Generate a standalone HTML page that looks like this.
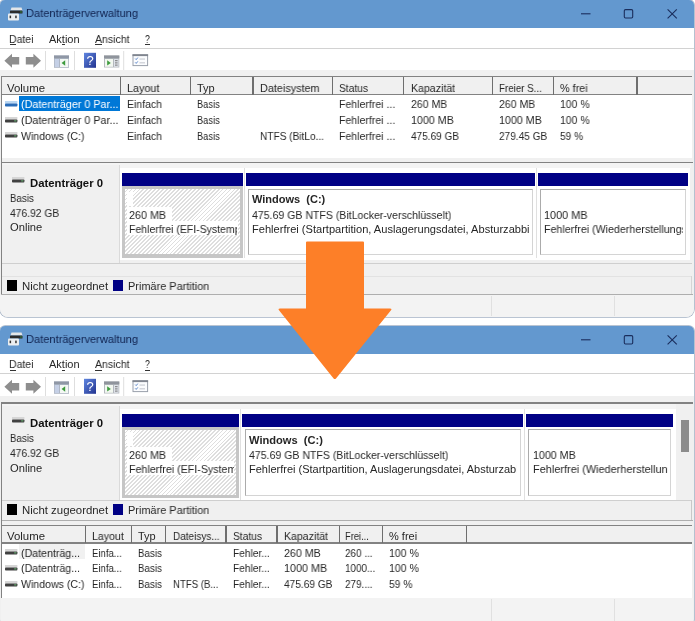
<!DOCTYPE html>
<html lang="de"><head><meta charset="utf-8"><title>Datenträgerverwaltung</title><style>
html,body{margin:0;padding:0;background:#fff;}
body{width:695px;height:621px;position:relative;overflow:hidden;font-family:"Liberation Sans",sans-serif;}
body>div,body>span,body>svg{position:absolute;}
.t{will-change:transform;white-space:pre;transform-origin:0 50%;display:block;}
.win{background:#f0f0f0;border-radius:5px 5px 8px 8px;box-shadow:0 0 0 0.8px #a3b1c4;}
</style></head><body>
<div class="win" style="left:0;top:0;width:694px;height:317.2px"></div>
<div style="left:0px;top:0px;width:694px;height:28px;background:#6398cf;border-radius:5px 5px 0 0;"></div>
<svg style="left:8px;top:6.5px" width="15" height="14" viewBox="0 0 15 14"><path d="M3.5 0.5 H13.5 L14.5 3.5 H2.5 Z" fill="#e4e6e8"/><rect x="2" y="3.5" width="12.5" height="3" rx="0.6" fill="#2b2b2b"/><rect x="12.3" y="4.3" width="1.4" height="1.3" fill="#2e8b3e"/><rect x="0" y="6.5" width="11" height="7" rx="1" fill="#eceef0"/><rect x="1.6" y="8.6" width="1.5" height="2.6" fill="#333"/><rect x="7.2" y="8.6" width="1.5" height="2.6" fill="#333"/></svg>
<span class="t" style="left:26px;top:6.15px;font-size:11.5px;line-height:14.5px;color:#10224f;transform:scaleX(0.9626);">Datenträgerverwaltung</span>
<svg style="left:575px;top:0px" width="110" height="28" viewBox="0 0 110 28" fill="none" stroke="#1a2d5c" stroke-width="1.1"><path d="M6 13.8 H15.5"/><rect x="49.3" y="9.6" width="8.4" height="8.4" rx="1.2"/><path d="M92.6 9.4 L101.8 18.4 M101.8 9.4 L92.6 18.4"/></svg>
<div style="left:0px;top:28px;width:694px;height:21px;background:#fff;"></div>
<div style="left:0px;top:47.8px;width:694px;height:1.2px;background:#d2d2d2;"></div>
<div style="left:0px;top:49px;width:694px;height:21px;background:#fff;"></div>
<span class="t" style="left:9.4px;top:31.8px;font-size:11px;line-height:14px;color:#262626;transform:scaleX(0.9541);">Datei</span>
<span class="t" style="left:49.3px;top:31.8px;font-size:11px;line-height:14px;color:#262626;transform:scaleX(0.9943);">Aktion</span>
<span class="t" style="left:95.3px;top:31.8px;font-size:11px;line-height:14px;color:#262626;transform:scaleX(0.9564);">Ansicht</span>
<span class="t" style="left:145px;top:31.8px;font-size:11px;line-height:14px;color:#262626;transform:scaleX(0.7846);">?</span>
<div style="left:9.6px;top:44.3px;width:6.5px;height:0.9px;background:#333;"></div>
<div style="left:61.7px;top:44.3px;width:3.3px;height:0.9px;background:#333;"></div>
<div style="left:95.4px;top:44.3px;width:6.8px;height:0.9px;background:#333;"></div>
<div style="left:145px;top:44.3px;width:4.8px;height:0.9px;background:#333;"></div>
<svg style="left:0;top:49px" width="160" height="22" viewBox="0 49 160 22"><path d="M4.4 60.8 L12 53.8 V57 H19.2 V64.6 H12 V67.8 Z" fill="#8e8e8e"/><path d="M41 60.8 L33.4 53.8 V57 H25.8 V64.6 H33.4 V67.8 Z" fill="#8e8e8e"/><rect x="45" y="51" width="1" height="19" fill="#dedede"/><rect x="54" y="55.5" width="15" height="12.3" fill="#aeb6c4"/><rect x="54" y="55.5" width="15" height="2.8" fill="#8f97a5"/><rect x="54.8" y="59" width="4.2" height="8" fill="#c5d0e6"/><rect x="60" y="59" width="8.2" height="8" fill="#f4f8f4"/><path d="M61.6 63 L65.2 60.2 V65.8 Z" fill="#3d9b3d"/><rect x="74" y="51" width="1" height="19" fill="#dedede"/><defs><linearGradient id="hg" x1="0" y1="0" x2="1" y2="1"><stop offset="0" stop-color="#5f86e0"/><stop offset="1" stop-color="#22338f"/></linearGradient></defs><rect x="84" y="52.8" width="12" height="15" fill="url(#hg)"/><text x="90" y="65" font-family="Liberation Sans, sans-serif" font-size="13" fill="#fff" text-anchor="middle">?</text><rect x="104" y="55.5" width="15.3" height="12" fill="#b4b8be"/><rect x="104" y="55.5" width="15.3" height="2.8" fill="#8f949c"/><rect x="105" y="59" width="8" height="7.8" fill="#f2f7f0"/><path d="M110.8 62.9 L107.2 60.2 V65.6 Z" fill="#3d9b3d"/><rect x="114" y="59" width="4.5" height="7.8" fill="#dfe3ea"/><rect x="115" y="60.2" width="2.6" height="1" fill="#777"/><rect x="115" y="62.4" width="2.6" height="1" fill="#777"/><rect x="115" y="64.6" width="2.6" height="1" fill="#777"/><rect x="123.2" y="51" width="1" height="19" fill="#dedede"/><rect x="133" y="54.8" width="14.6" height="10.8" fill="#fbfcfe" stroke="#9aa0ab" stroke-width="1"/><rect x="132.5" y="54.3" width="15.6" height="1.8" fill="#80858f"/><path d="M135.2 58.6 l1 1 l1.6 -2 M135.2 62.4 l1 1 l1.6 -2" stroke="#5b86c9" stroke-width="1" fill="none"/><rect x="139.5" y="58.6" width="5.5" height="0.9" fill="#b9bdc6"/><rect x="139.5" y="62.4" width="5.5" height="0.9" fill="#b9bdc6"/></svg>
<div style="left:0.6px;top:76.1px;width:691.6px;height:81.9px;background:#fff;"></div>
<div style="left:0.6px;top:77.1px;width:691.6px;height:17.9px;background:#f0f0f0;"></div>
<div style="left:0.6px;top:76.1px;width:691.6px;height:1.3px;background:#828282;"></div>
<div style="left:0.6px;top:94px;width:691.6px;height:1.3px;background:#828282;"></div>
<div style="left:0.5px;top:76.1px;width:1.4px;height:81.9px;background:#828282;"></div>
<span class="t" style="left:7.3px;top:80.6px;font-size:11px;line-height:14px;color:#262626;transform:scaleX(1.0357);">Volume</span>
<div style="left:119.65px;top:77.1px;width:1.3px;height:17.9px;background:#6e6e6e;"></div>
<span class="t" style="left:126.8px;top:80.6px;font-size:11px;line-height:14px;color:#262626;transform:scaleX(0.9810);">Layout</span>
<div style="left:189.65px;top:77.1px;width:1.3px;height:17.9px;background:#6e6e6e;"></div>
<span class="t" style="left:197.3px;top:80.6px;font-size:11px;line-height:14px;color:#262626;transform:scaleX(0.9926);">Typ</span>
<div style="left:252.35px;top:77.1px;width:1.3px;height:17.9px;background:#6e6e6e;"></div>
<span class="t" style="left:259.9px;top:80.6px;font-size:11px;line-height:14px;color:#262626;transform:scaleX(0.9848);">Dateisystem</span>
<div style="left:331.75px;top:77.1px;width:1.3px;height:17.9px;background:#6e6e6e;"></div>
<span class="t" style="left:339.4px;top:80.6px;font-size:11px;line-height:14px;color:#262626;transform:scaleX(0.9299);">Status</span>
<div style="left:402.75px;top:77.1px;width:1.3px;height:17.9px;background:#6e6e6e;"></div>
<span class="t" style="left:410.5px;top:80.6px;font-size:11px;line-height:14px;color:#262626;transform:scaleX(0.9615);">Kapazität</span>
<div style="left:491.95px;top:77.1px;width:1.3px;height:17.9px;background:#6e6e6e;"></div>
<span class="t" style="left:499.1px;top:80.6px;font-size:11px;line-height:14px;color:#262626;transform:scaleX(0.8864);">Freier S...</span>
<div style="left:552.75px;top:77.1px;width:1.3px;height:17.9px;background:#6e6e6e;"></div>
<span class="t" style="left:560.4px;top:80.6px;font-size:11px;line-height:14px;color:#262626;transform:scaleX(0.9816);">% frei</span>
<div style="left:636.35px;top:77.1px;width:1.3px;height:17.9px;background:#6e6e6e;"></div>
<div style="left:19.2px;top:95.7px;width:101.2px;height:15px;background:#0078d7;"></div>
<svg style="left:5px;top:100.7px" width="13" height="7" viewBox="0 0 13 7"><rect x="0" y="0" width="12.4" height="2.6" fill="#b9d6f2"/><rect x="0" y="2.4" width="12.4" height="3.2" rx="0.8" fill="#2a6cb8"/></svg>
<span class="t" style="left:20.6px;top:97.3px;font-size:11px;line-height:14px;color:#fff;transform:scaleX(0.9783);">(Datenträger 0 Par...</span>
<span class="t" style="left:126.8px;top:97.3px;font-size:11px;line-height:14px;color:#262626;transform:scaleX(0.9539);">Einfach</span>
<span class="t" style="left:197.3px;top:97.3px;font-size:11px;line-height:14px;color:#262626;transform:scaleX(0.8439);">Basis</span>
<span class="t" style="left:339.4px;top:97.3px;font-size:11px;line-height:14px;color:#262626;transform:scaleX(0.9576);">Fehlerfrei ...</span>
<span class="t" style="left:410.5px;top:97.3px;font-size:11px;line-height:14px;color:#262626;transform:scaleX(0.9575);">260 MB</span>
<span class="t" style="left:499.1px;top:97.3px;font-size:11px;line-height:14px;color:#262626;transform:scaleX(0.9575);">260 MB</span>
<span class="t" style="left:560.4px;top:97.3px;font-size:11px;line-height:14px;color:#262626;transform:scaleX(0.9490);">100 %</span>
<svg style="left:5px;top:116.5px" width="13" height="7" viewBox="0 0 13 7"><rect x="0" y="0" width="12.4" height="2.6" fill="#d6d6d6"/><rect x="0" y="2.4" width="12.4" height="3.2" rx="0.8" fill="#404040"/><rect x="9.2" y="3.2" width="2.2" height="1.3" fill="#5f9e68"/></svg>
<span class="t" style="left:20.6px;top:113.1px;font-size:11px;line-height:14px;color:#262626;transform:scaleX(0.9783);">(Datenträger 0 Par...</span>
<span class="t" style="left:126.8px;top:113.1px;font-size:11px;line-height:14px;color:#262626;transform:scaleX(0.9539);">Einfach</span>
<span class="t" style="left:197.3px;top:113.1px;font-size:11px;line-height:14px;color:#262626;transform:scaleX(0.8439);">Basis</span>
<span class="t" style="left:339.4px;top:113.1px;font-size:11px;line-height:14px;color:#262626;transform:scaleX(0.9576);">Fehlerfrei ...</span>
<span class="t" style="left:410.5px;top:113.1px;font-size:11px;line-height:14px;color:#262626;transform:scaleX(0.9721);">1000 MB</span>
<span class="t" style="left:499.1px;top:113.1px;font-size:11px;line-height:14px;color:#262626;transform:scaleX(0.9721);">1000 MB</span>
<span class="t" style="left:560.4px;top:113.1px;font-size:11px;line-height:14px;color:#262626;transform:scaleX(0.9490);">100 %</span>
<svg style="left:5px;top:132.3px" width="13" height="7" viewBox="0 0 13 7"><rect x="0" y="0" width="12.4" height="2.6" fill="#d6d6d6"/><rect x="0" y="2.4" width="12.4" height="3.2" rx="0.8" fill="#404040"/><rect x="9.2" y="3.2" width="2.2" height="1.3" fill="#5f9e68"/></svg>
<span class="t" style="left:20.6px;top:128.9px;font-size:11px;line-height:14px;color:#262626;transform:scaleX(0.9620);">Windows (C:)</span>
<span class="t" style="left:126.8px;top:128.9px;font-size:11px;line-height:14px;color:#262626;transform:scaleX(0.9539);">Einfach</span>
<span class="t" style="left:197.3px;top:128.9px;font-size:11px;line-height:14px;color:#262626;transform:scaleX(0.8439);">Basis</span>
<span class="t" style="left:259.9px;top:128.9px;font-size:11px;line-height:14px;color:#262626;transform:scaleX(0.9185);">NTFS (BitLo...</span>
<span class="t" style="left:339.4px;top:128.9px;font-size:11px;line-height:14px;color:#262626;transform:scaleX(0.9576);">Fehlerfrei ...</span>
<span class="t" style="left:410.5px;top:128.9px;font-size:11px;line-height:14px;color:#262626;transform:scaleX(0.9126);">475.69 GB</span>
<span class="t" style="left:499.1px;top:128.9px;font-size:11px;line-height:14px;color:#262626;transform:scaleX(0.9164);">279.45 GB</span>
<span class="t" style="left:560.4px;top:128.9px;font-size:11px;line-height:14px;color:#262626;transform:scaleX(0.9253);">59 %</span>
<div style="left:1px;top:162px;width:692px;height:1.2px;background:#828282;"></div>
<div style="left:1px;top:162px;width:1.2px;height:132px;background:#828282;"></div>
<div style="left:2.2px;top:163.2px;width:689px;height:5px;background:#f4f4f4;"></div>
<div style="left:2.2px;top:168px;width:688px;height:92px;background:#fff;"></div>
<div style="left:2.2px;top:165px;width:118px;height:98.5px;background:#f0f0f0;box-sizing:border-box;border-right:1.5px solid #dadada;border-bottom:1.5px solid #c4c4c4;"></div>
<svg style="left:12px;top:176.8px" width="13" height="7" viewBox="0 0 13 7"><rect x="0" y="0" width="12.4" height="2.6" fill="#d6d6d6"/><rect x="0" y="2.4" width="12.4" height="3.2" rx="0.8" fill="#404040"/><rect x="9.2" y="3.2" width="2.2" height="1.3" fill="#5f9e68"/></svg>
<span class="t" style="left:29.9px;top:175.8px;font-size:11px;line-height:14px;color:#111;font-weight:bold;transform:scaleX(1.0294);">Datenträger 0</span>
<span class="t" style="left:10.3px;top:190.7px;font-size:11px;line-height:14px;color:#262626;transform:scaleX(0.8811);">Basis</span>
<span class="t" style="left:10.3px;top:205.6px;font-size:11px;line-height:14px;color:#262626;transform:scaleX(0.9355);">476.92 GB</span>
<span class="t" style="left:10.3px;top:220.3px;font-size:11px;line-height:14px;color:#262626;transform:scaleX(1.0158);">Online</span>
<div style="left:121.7px;top:173px;width:121px;height:13px;background:#000084;"></div>
<div style="left:121.7px;top:186px;width:121px;height:71.5px;background:#c6c6c6;"></div>
<div style="left:125.3px;top:189.4px;width:114.4px;height:65.1px;background:repeating-linear-gradient(135deg,#fff 0,#fff 1.5px,#dedede 1.5px,#dedede 2.8px);"></div>
<div style="left:126.8px;top:191.6px;width:6px;height:14.6px;background:#fff;"></div>
<div style="left:126.8px;top:206.7px;width:45.1px;height:14.6px;background:#fff;"></div>
<span class="t" style="left:128.6px;top:207.5px;font-size:11px;line-height:14px;color:#262626;transform:scaleX(0.9786);">260 MB</span>
<div style="left:126.8px;top:220.9px;width:110.8px;height:14.6px;background:#fff;"></div>
<div style="left:128.6px;top:221.7px;width:108.8px;height:14px;overflow:hidden;"><span class="t" style="font-size:11px;line-height:14px;color:#262626;transform:scaleX(0.9554);">Fehlerfrei (EFI-Systempartition)</span></div>
<div style="left:245.7px;top:173px;width:289px;height:13px;background:#000084;"></div>
<div style="left:245.7px;top:186px;width:289px;height:71.5px;background:#fff;"></div>
<div style="left:248.1px;top:188.8px;width:284.5px;height:66px;background:#fff;box-sizing:border-box;border:1px solid #ababab;border-right-color:#d4d4d4;border-bottom-color:#d4d4d4;"></div>
<span class="t" style="left:252.4px;top:192.4px;font-size:11px;line-height:14px;color:#262626;font-weight:bold;">Windows  (C:)</span>
<span class="t" style="left:252.4px;top:207.5px;font-size:11px;line-height:14px;color:#262626;transform:scaleX(0.9589);">475.69 GB NTFS (BitLocker-verschlüsselt)</span>
<div style="left:252.4px;top:221.7px;width:277.2px;height:14px;overflow:hidden;"><span class="t" style="font-size:11px;line-height:14px;color:#262626;transform:scaleX(1.0066);">Fehlerfrei (Startpartition, Auslagerungsdatei, Absturzabbild, Basisdatenpartition)</span></div>
<div style="left:537.8px;top:173px;width:150.4px;height:13px;background:#000084;"></div>
<div style="left:537.8px;top:186px;width:150.4px;height:71.5px;background:#fff;"></div>
<div style="left:540.2px;top:188.8px;width:145.9px;height:66px;background:#fff;box-sizing:border-box;border:1px solid #ababab;border-right-color:#d4d4d4;border-bottom-color:#d4d4d4;"></div>
<span class="t" style="left:544px;top:207.5px;font-size:11px;line-height:14px;color:#262626;transform:scaleX(0.9880);">1000 MB</span>
<div style="left:544px;top:221.7px;width:139px;height:14px;overflow:hidden;"><span class="t" style="font-size:11px;line-height:14px;color:#262626;transform:scaleX(0.9701);">Fehlerfrei (Wiederherstellungspartition)</span></div>
<div style="left:243.6px;top:168px;width:1px;height:90px;background:#e0e0e0;"></div>
<div style="left:535.8px;top:168px;width:1px;height:90px;background:#e0e0e0;"></div>
<div style="left:2.2px;top:263px;width:690px;height:1px;background:#cfcfcf;"></div>
<div style="left:2.2px;top:276px;width:689px;height:1px;background:#e2e2e2;"></div>
<div style="left:690.5px;top:276px;width:1px;height:18px;background:#d5d5d5;"></div>
<div style="left:7px;top:279.8px;width:9.6px;height:10.8px;background:#000;"></div>
<span class="t" style="left:21.5px;top:278.7px;font-size:11px;line-height:14px;color:#262626;transform:scaleX(1.0353);">Nicht zugeordnet</span>
<div style="left:113.2px;top:279.8px;width:9.6px;height:10.8px;background:#000084;"></div>
<span class="t" style="left:127.6px;top:278.7px;font-size:11px;line-height:14px;color:#262626;transform:scaleX(0.9925);">Primäre Partition</span>
<div style="left:1px;top:293.6px;width:692px;height:1.2px;background:#aeaeae;"></div>
<div style="left:0.5px;top:76.1px;width:1.4px;height:218px;background:#828282;"></div>
<div style="left:0px;top:294.8px;width:694px;height:22.4px;background:#f3f3f3;border-radius:0 0 8px 8px;"></div>
<div style="left:490.5px;top:296px;width:1px;height:20px;background:#e0e0e0;"></div>
<div style="left:613.5px;top:296px;width:1px;height:20px;background:#e0e0e0;"></div>
<div class="win" style="left:0;top:325.5px;width:694px;height:301px"></div>
<div style="left:0px;top:325.5px;width:694px;height:28px;background:#6398cf;border-radius:5px 5px 0 0;"></div>
<svg style="left:8px;top:332.0px" width="15" height="14" viewBox="0 0 15 14"><path d="M3.5 0.5 H13.5 L14.5 3.5 H2.5 Z" fill="#e4e6e8"/><rect x="2" y="3.5" width="12.5" height="3" rx="0.6" fill="#2b2b2b"/><rect x="12.3" y="4.3" width="1.4" height="1.3" fill="#2e8b3e"/><rect x="0" y="6.5" width="11" height="7" rx="1" fill="#eceef0"/><rect x="1.6" y="8.6" width="1.5" height="2.6" fill="#333"/><rect x="7.2" y="8.6" width="1.5" height="2.6" fill="#333"/></svg>
<span class="t" style="left:26px;top:331.65px;font-size:11.5px;line-height:14.5px;color:#10224f;transform:scaleX(0.9626);">Datenträgerverwaltung</span>
<svg style="left:575px;top:325.5px" width="110" height="28" viewBox="0 0 110 28" fill="none" stroke="#1a2d5c" stroke-width="1.1"><path d="M6 13.8 H15.5"/><rect x="49.3" y="9.6" width="8.4" height="8.4" rx="1.2"/><path d="M92.6 9.4 L101.8 18.4 M101.8 9.4 L92.6 18.4"/></svg>
<div style="left:0px;top:353.5px;width:694px;height:21px;background:#fff;"></div>
<div style="left:0px;top:373.3px;width:694px;height:1.2px;background:#d2d2d2;"></div>
<div style="left:0px;top:374.5px;width:694px;height:21px;background:#fff;"></div>
<span class="t" style="left:9.4px;top:357.3px;font-size:11px;line-height:14px;color:#262626;transform:scaleX(0.9541);">Datei</span>
<span class="t" style="left:49.3px;top:357.3px;font-size:11px;line-height:14px;color:#262626;transform:scaleX(0.9943);">Aktion</span>
<span class="t" style="left:95.3px;top:357.3px;font-size:11px;line-height:14px;color:#262626;transform:scaleX(0.9564);">Ansicht</span>
<span class="t" style="left:145px;top:357.3px;font-size:11px;line-height:14px;color:#262626;transform:scaleX(0.7846);">?</span>
<div style="left:9.6px;top:369.8px;width:6.5px;height:0.9px;background:#333;"></div>
<div style="left:61.7px;top:369.8px;width:3.3px;height:0.9px;background:#333;"></div>
<div style="left:95.4px;top:369.8px;width:6.8px;height:0.9px;background:#333;"></div>
<div style="left:145px;top:369.8px;width:4.8px;height:0.9px;background:#333;"></div>
<svg style="left:0;top:374.5px" width="160" height="22" viewBox="0 49 160 22"><path d="M4.4 60.8 L12 53.8 V57 H19.2 V64.6 H12 V67.8 Z" fill="#8e8e8e"/><path d="M41 60.8 L33.4 53.8 V57 H25.8 V64.6 H33.4 V67.8 Z" fill="#8e8e8e"/><rect x="45" y="51" width="1" height="19" fill="#dedede"/><rect x="54" y="55.5" width="15" height="12.3" fill="#aeb6c4"/><rect x="54" y="55.5" width="15" height="2.8" fill="#8f97a5"/><rect x="54.8" y="59" width="4.2" height="8" fill="#c5d0e6"/><rect x="60" y="59" width="8.2" height="8" fill="#f4f8f4"/><path d="M61.6 63 L65.2 60.2 V65.8 Z" fill="#3d9b3d"/><rect x="74" y="51" width="1" height="19" fill="#dedede"/><defs><linearGradient id="hg" x1="0" y1="0" x2="1" y2="1"><stop offset="0" stop-color="#5f86e0"/><stop offset="1" stop-color="#22338f"/></linearGradient></defs><rect x="84" y="52.8" width="12" height="15" fill="url(#hg)"/><text x="90" y="65" font-family="Liberation Sans, sans-serif" font-size="13" fill="#fff" text-anchor="middle">?</text><rect x="104" y="55.5" width="15.3" height="12" fill="#b4b8be"/><rect x="104" y="55.5" width="15.3" height="2.8" fill="#8f949c"/><rect x="105" y="59" width="8" height="7.8" fill="#f2f7f0"/><path d="M110.8 62.9 L107.2 60.2 V65.6 Z" fill="#3d9b3d"/><rect x="114" y="59" width="4.5" height="7.8" fill="#dfe3ea"/><rect x="115" y="60.2" width="2.6" height="1" fill="#777"/><rect x="115" y="62.4" width="2.6" height="1" fill="#777"/><rect x="115" y="64.6" width="2.6" height="1" fill="#777"/><rect x="123.2" y="51" width="1" height="19" fill="#dedede"/><rect x="133" y="54.8" width="14.6" height="10.8" fill="#fbfcfe" stroke="#9aa0ab" stroke-width="1"/><rect x="132.5" y="54.3" width="15.6" height="1.8" fill="#80858f"/><path d="M135.2 58.6 l1 1 l1.6 -2 M135.2 62.4 l1 1 l1.6 -2" stroke="#5b86c9" stroke-width="1" fill="none"/><rect x="139.5" y="58.6" width="5.5" height="0.9" fill="#b9bdc6"/><rect x="139.5" y="62.4" width="5.5" height="0.9" fill="#b9bdc6"/></svg>
<div style="left:1px;top:402.4px;width:692px;height:1.2px;background:#828282;"></div>
<div style="left:1px;top:402.4px;width:1.2px;height:118px;background:#828282;"></div>
<div style="left:2.2px;top:403.6px;width:689px;height:5px;background:#f4f4f4;"></div>
<div style="left:2.2px;top:408.5px;width:673.5px;height:92px;background:#fff;"></div>
<div style="left:2.2px;top:406px;width:118px;height:94.8px;background:#f0f0f0;box-sizing:border-box;border-right:1.5px solid #dadada;border-bottom:1.5px solid #c4c4c4;"></div>
<svg style="left:12px;top:417.2px" width="13" height="7" viewBox="0 0 13 7"><rect x="0" y="0" width="12.4" height="2.6" fill="#d6d6d6"/><rect x="0" y="2.4" width="12.4" height="3.2" rx="0.8" fill="#404040"/><rect x="9.2" y="3.2" width="2.2" height="1.3" fill="#5f9e68"/></svg>
<span class="t" style="left:29.9px;top:416.2px;font-size:11px;line-height:14px;color:#111;font-weight:bold;transform:scaleX(1.0294);">Datenträger 0</span>
<span class="t" style="left:10.3px;top:431.1px;font-size:11px;line-height:14px;color:#262626;transform:scaleX(0.8811);">Basis</span>
<span class="t" style="left:10.3px;top:446px;font-size:11px;line-height:14px;color:#262626;transform:scaleX(0.9355);">476.92 GB</span>
<span class="t" style="left:10.3px;top:460.7px;font-size:11px;line-height:14px;color:#262626;transform:scaleX(1.0158);">Online</span>
<div style="left:121.7px;top:413.6px;width:117.4px;height:13px;background:#000084;"></div>
<div style="left:121.7px;top:426.6px;width:117.4px;height:71.8px;background:#c6c6c6;"></div>
<div style="left:125.3px;top:430px;width:110.8px;height:65.4px;background:repeating-linear-gradient(135deg,#fff 0,#fff 1.5px,#dedede 1.5px,#dedede 2.8px);"></div>
<div style="left:126.8px;top:431.9px;width:6px;height:14.6px;background:#fff;"></div>
<div style="left:126.8px;top:446.7px;width:45.1px;height:14.6px;background:#fff;"></div>
<span class="t" style="left:128.6px;top:447.5px;font-size:11px;line-height:14px;color:#262626;transform:scaleX(0.9786);">260 MB</span>
<div style="left:126.8px;top:460.9px;width:107.3px;height:14.6px;background:#fff;"></div>
<div style="left:128.6px;top:461.7px;width:105.3px;height:14px;overflow:hidden;"><span class="t" style="font-size:11px;line-height:14px;color:#262626;transform:scaleX(0.9708);">Fehlerfrei (EFI-Systempartition)</span></div>
<div style="left:242.1px;top:413.6px;width:280.7px;height:13px;background:#000084;"></div>
<div style="left:242.1px;top:426.6px;width:280.7px;height:72.4px;background:#fff;"></div>
<div style="left:244.5px;top:429.4px;width:276.2px;height:66.9px;background:#fff;box-sizing:border-box;border:1px solid #ababab;border-right-color:#d4d4d4;border-bottom-color:#d4d4d4;"></div>
<span class="t" style="left:248.5px;top:432.7px;font-size:11px;line-height:14px;color:#262626;font-weight:bold;transform:scaleX(1.0093);">Windows  (C:)</span>
<span class="t" style="left:248.5px;top:447.5px;font-size:11px;line-height:14px;color:#262626;transform:scaleX(0.9589);">475.69 GB NTFS (BitLocker-verschlüsselt)</span>
<div style="left:248.5px;top:461.7px;width:268.6px;height:14px;overflow:hidden;"><span class="t" style="font-size:11px;line-height:14px;color:#262626;">Fehlerfrei (Startpartition, Auslagerungsdatei, Absturzabbild, Basisdatenpartition)</span></div>
<div style="left:525.9px;top:413.6px;width:147.6px;height:13px;background:#000084;"></div>
<div style="left:525.9px;top:426.6px;width:147.6px;height:72.4px;background:#fff;"></div>
<div style="left:528.3px;top:429.4px;width:143.1px;height:66.9px;background:#fff;box-sizing:border-box;border:1px solid #ababab;border-right-color:#d4d4d4;border-bottom-color:#d4d4d4;"></div>
<span class="t" style="left:532.6px;top:447.5px;font-size:11px;line-height:14px;color:#262626;transform:scaleX(0.9698);">1000 MB</span>
<div style="left:532.6px;top:461.7px;width:135.6px;height:14px;overflow:hidden;"><span class="t" style="font-size:11px;line-height:14px;color:#262626;transform:scaleX(0.9927);">Fehlerfrei (Wiederherstellungspartition)</span></div>
<div style="left:675.8px;top:403.6px;width:15.5px;height:97px;background:#f0f0f0;"></div>
<div style="left:680.8px;top:419.6px;width:8.2px;height:32.5px;background:#8c8c8c;"></div>
<div style="left:240.1px;top:408.5px;width:1px;height:91px;background:#e0e0e0;"></div>
<div style="left:523.9px;top:408.5px;width:1px;height:91px;background:#e0e0e0;"></div>
<div style="left:2.2px;top:500.4px;width:690px;height:1px;background:#cfcfcf;"></div>
<div style="left:691px;top:500px;width:1px;height:20px;background:#c8c8c8;"></div>
<div style="left:7px;top:504.4px;width:9.6px;height:10.8px;background:#000;"></div>
<span class="t" style="left:21.5px;top:503.3px;font-size:11px;line-height:14px;color:#262626;transform:scaleX(1.0353);">Nicht zugeordnet</span>
<div style="left:113.2px;top:504.4px;width:9.6px;height:10.8px;background:#000084;"></div>
<span class="t" style="left:127.6px;top:503.3px;font-size:11px;line-height:14px;color:#262626;transform:scaleX(0.9925);">Primäre Partition</span>
<div style="left:1px;top:519.6px;width:692px;height:1.2px;background:#aeaeae;"></div>
<div style="left:1px;top:520.8px;width:692px;height:4.5px;background:#f0f0f0;"></div>
<div style="left:0.6px;top:524.9px;width:691.6px;height:73.2px;background:#fff;"></div>
<div style="left:0.6px;top:525.9px;width:691.6px;height:17.4px;background:#f0f0f0;"></div>
<div style="left:0.6px;top:524.9px;width:691.6px;height:1.3px;background:#828282;"></div>
<div style="left:0.6px;top:542.3px;width:691.6px;height:1.3px;background:#828282;"></div>
<div style="left:0.5px;top:524.9px;width:1.4px;height:73.2px;background:#828282;"></div>
<span class="t" style="left:7.3px;top:529px;font-size:11px;line-height:14px;color:#262626;transform:scaleX(1.0357);">Volume</span>
<div style="left:84.85px;top:525.9px;width:1.3px;height:17.4px;background:#6e6e6e;"></div>
<span class="t" style="left:92px;top:529px;font-size:11px;line-height:14px;color:#262626;transform:scaleX(0.9628);">Layout</span>
<div style="left:130.85px;top:525.9px;width:1.3px;height:17.4px;background:#6e6e6e;"></div>
<span class="t" style="left:138px;top:529px;font-size:11px;line-height:14px;color:#262626;transform:scaleX(0.9814);">Typ</span>
<div style="left:165.05px;top:525.9px;width:1.3px;height:17.4px;background:#6e6e6e;"></div>
<span class="t" style="left:173px;top:529px;font-size:11px;line-height:14px;color:#262626;transform:scaleX(0.9075);">Dateisys...</span>
<div style="left:225.35px;top:525.9px;width:1.3px;height:17.4px;background:#6e6e6e;"></div>
<span class="t" style="left:233.3px;top:529px;font-size:11px;line-height:14px;color:#262626;transform:scaleX(0.9299);">Status</span>
<div style="left:276.35px;top:525.9px;width:1.3px;height:17.4px;background:#6e6e6e;"></div>
<span class="t" style="left:283.8px;top:529px;font-size:11px;line-height:14px;color:#262626;transform:scaleX(0.9593);">Kapazität</span>
<div style="left:338.75px;top:525.9px;width:1.3px;height:17.4px;background:#6e6e6e;"></div>
<span class="t" style="left:345.4px;top:529px;font-size:11px;line-height:14px;color:#262626;transform:scaleX(0.8466);">Frei...</span>
<div style="left:381.55px;top:525.9px;width:1.3px;height:17.4px;background:#6e6e6e;"></div>
<span class="t" style="left:389.2px;top:529px;font-size:11px;line-height:14px;color:#262626;transform:scaleX(0.9923);">% frei</span>
<div style="left:465.65px;top:525.9px;width:1.3px;height:17.4px;background:#6e6e6e;"></div>
<div style="left:19.2px;top:543.9px;width:66px;height:15px;background:#f1f1f1;"></div>
<svg style="left:5px;top:548.9px" width="13" height="7" viewBox="0 0 13 7"><rect x="0" y="0" width="12.4" height="2.6" fill="#d6d6d6"/><rect x="0" y="2.4" width="12.4" height="3.2" rx="0.8" fill="#404040"/><rect x="9.2" y="3.2" width="2.2" height="1.3" fill="#5f9e68"/></svg>
<span class="t" style="left:20.7px;top:545.5px;font-size:11px;line-height:14px;color:#262626;transform:scaleX(0.9666);">(Datenträg...</span>
<span class="t" style="left:92px;top:545.5px;font-size:11px;line-height:14px;color:#262626;transform:scaleX(0.8674);">Einfa...</span>
<span class="t" style="left:138px;top:545.5px;font-size:11px;line-height:14px;color:#262626;transform:scaleX(0.8885);">Basis</span>
<span class="t" style="left:233.3px;top:545.5px;font-size:11px;line-height:14px;color:#262626;transform:scaleX(0.9235);">Fehler...</span>
<span class="t" style="left:283.8px;top:545.5px;font-size:11px;line-height:14px;color:#262626;transform:scaleX(0.9707);">260 MB</span>
<span class="t" style="left:345.4px;top:545.5px;font-size:11px;line-height:14px;color:#262626;transform:scaleX(0.9026);">260 ...</span>
<span class="t" style="left:389.2px;top:545.5px;font-size:11px;line-height:14px;color:#262626;transform:scaleX(0.9554);">100 %</span>
<svg style="left:5px;top:564.6999999999999px" width="13" height="7" viewBox="0 0 13 7"><rect x="0" y="0" width="12.4" height="2.6" fill="#d6d6d6"/><rect x="0" y="2.4" width="12.4" height="3.2" rx="0.8" fill="#404040"/><rect x="9.2" y="3.2" width="2.2" height="1.3" fill="#5f9e68"/></svg>
<span class="t" style="left:20.7px;top:561.3px;font-size:11px;line-height:14px;color:#262626;transform:scaleX(0.9666);">(Datenträg...</span>
<span class="t" style="left:92px;top:561.3px;font-size:11px;line-height:14px;color:#262626;transform:scaleX(0.8674);">Einfa...</span>
<span class="t" style="left:138px;top:561.3px;font-size:11px;line-height:14px;color:#262626;transform:scaleX(0.8885);">Basis</span>
<span class="t" style="left:233.3px;top:561.3px;font-size:11px;line-height:14px;color:#262626;transform:scaleX(0.9235);">Fehler...</span>
<span class="t" style="left:283.8px;top:561.3px;font-size:11px;line-height:14px;color:#262626;transform:scaleX(0.9812);">1000 MB</span>
<span class="t" style="left:345.4px;top:561.3px;font-size:11px;line-height:14px;color:#262626;transform:scaleX(0.9007);">1000...</span>
<span class="t" style="left:389.2px;top:561.3px;font-size:11px;line-height:14px;color:#262626;transform:scaleX(0.9554);">100 %</span>
<svg style="left:5px;top:580.5px" width="13" height="7" viewBox="0 0 13 7"><rect x="0" y="0" width="12.4" height="2.6" fill="#d6d6d6"/><rect x="0" y="2.4" width="12.4" height="3.2" rx="0.8" fill="#404040"/><rect x="9.2" y="3.2" width="2.2" height="1.3" fill="#5f9e68"/></svg>
<span class="t" style="left:20.7px;top:577.1px;font-size:11px;line-height:14px;color:#262626;transform:scaleX(0.9620);">Windows (C:)</span>
<span class="t" style="left:92px;top:577.1px;font-size:11px;line-height:14px;color:#262626;transform:scaleX(0.8674);">Einfa...</span>
<span class="t" style="left:138px;top:577.1px;font-size:11px;line-height:14px;color:#262626;transform:scaleX(0.8885);">Basis</span>
<span class="t" style="left:173px;top:577.1px;font-size:11px;line-height:14px;color:#262626;transform:scaleX(0.8721);">NTFS (B...</span>
<span class="t" style="left:233.3px;top:577.1px;font-size:11px;line-height:14px;color:#262626;transform:scaleX(0.9235);">Fehler...</span>
<span class="t" style="left:283.8px;top:577.1px;font-size:11px;line-height:14px;color:#262626;transform:scaleX(0.9202);">475.69 GB</span>
<span class="t" style="left:345.4px;top:577.1px;font-size:11px;line-height:14px;color:#262626;transform:scaleX(0.9026);">279....</span>
<span class="t" style="left:389.2px;top:577.1px;font-size:11px;line-height:14px;color:#262626;transform:scaleX(0.9373);">59 %</span>
<div style="left:0.5px;top:402.4px;width:1.4px;height:195.5px;background:#828282;"></div>
<div style="left:1px;top:597.8px;width:692px;height:24px;background:#f3f3f3;"></div>
<div style="left:490.5px;top:599px;width:1px;height:22px;background:#e0e0e0;"></div>
<div style="left:613.5px;top:599px;width:1px;height:22px;background:#e0e0e0;"></div>
<svg style="left:270px;top:236px" width="130" height="150" viewBox="270 236 130 150"><path d="M307 241.6 H363 Q364 241.6 364 242.6 V308.4 H390 Q392.4 308.6 390.8 310.4 L336 378.4 Q334.8 379.8 333.6 378.4 L279.2 310.4 Q277.6 308.6 280 308.4 H306 V242.6 Q306 241.6 307 241.6 Z" fill="#fd7f28"/></svg>
</body></html>
